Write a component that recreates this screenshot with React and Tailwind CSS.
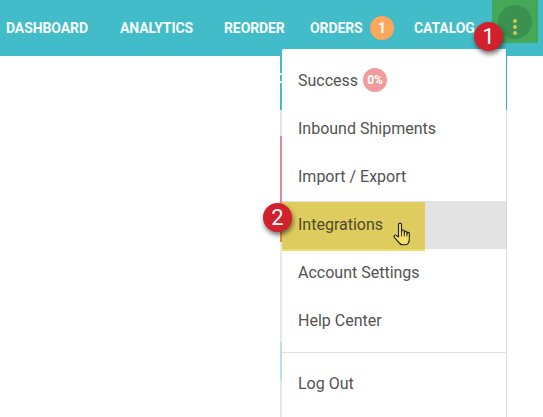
import React from 'react';

const navItems = [
  { label: 'DASHBOARD', width: 'w-[114px]' },
  { label: 'ANALYTICS', width: 'w-[104px]' },
  { label: 'REORDER', width: 'w-[86px]' },
];

const menuItems = ['Inbound Shipments', 'Import / Export'];

// bits of the page that show beside the menu's left edge
const sliver = [
  { h: 'h-[17px]', bg: 'bg-[#42bcc9]' },
  { h: 'h-[2px]', bg: 'bg-[#dff3f5]' },
  { h: 'h-[6px]', bg: 'bg-[#42bcc9]' },
  { h: 'h-[2px]', bg: 'bg-[#dff3f5]' },
  { h: 'h-[27px]', bg: 'bg-[#42bcc9]' },
  { h: 'h-[26px]', bg: 'bg-[#e2e2e2]' },
  { h: 'h-[89px]', bg: 'bg-[#e58a90]' },
  { h: 'h-[17px]', bg: 'bg-[#e08a3c]' },
  { h: 'h-[100px]', bg: 'bg-[#e9e9e9]' },
  { h: 'h-[38px]', bg: 'bg-[#b2e3e8]' },
  { h: 'h-[37px]', bg: 'bg-[#e6e6e6]' },
];

function Callout({ n, className }) {
  return (
    <div className={`absolute h-[29px] w-[29px] rounded-full bg-[#d2202c] text-center text-[22px] leading-[29px] text-white shadow-[1px_3px_5px_rgba(0,0,0,0.55)] ${className}`}>
      {n}
    </div>
  );
}

function HandCursor() {
  return (
    <svg className="absolute left-[393px] top-[222px]" width="18" height="25" viewBox="0 0 18 25">
      <path
        d="M5.5 15V2.6a1.5 1.5 0 0 1 3 0v7.6l.3-1.4a1.3 1.3 0 0 1 2.5.3v1.9l.3-1a1.2 1.2 0 0 1 2.3.4v1.5l.2-.6a1.1 1.1 0 0 1 2.2.4v5.6c0 3-1.6 5.5-4.6 5.5H9.5c-2.2 0-3.2-1.3-4.4-3.2L1.2 15.2a1.4 1.4 0 0 1 2.1-1.8z"
        fill="#f6e06a"
        stroke="#1f1f1f"
        strokeWidth="1.1"
        strokeLinejoin="round"
      />
      <path d="M8.5 10v4.5M11.3 10.5v4M14 11.5v3" stroke="#1f1f1f" strokeWidth="0.9" fill="none" />
    </svg>
  );
}

export default function App() {
  return (
    <div className="relative h-[417px] w-[543px] overflow-hidden bg-white font-['Roboto',sans-serif]">
      {/* top bar */}
      <div className="flex h-[56px] items-center bg-[#42bcc9] pl-[6px] text-[14px] font-bold tracking-[-0.1px] text-[#f7fcfd]">
        {navItems.map(item => (
          <span key={item.label} className={item.width}>{item.label}</span>
        ))}
        <span className="w-[60px]">ORDERS</span>
        <span className="h-[24px] w-[24px] rounded-full bg-[#fda65c] text-center text-[14px] leading-[24px]">1</span>
        <span className="ml-[20px]">CATALOG</span>
      </div>

      {/* highlighted kebab button */}
      <div className="absolute left-[492px] top-0 flex h-[43px] w-[46px] justify-center bg-[#44a856] pt-[5px]">
        <div className="flex h-[34px] w-[34px] flex-col items-center gap-[2px] rounded-full bg-[#3a9150] pt-[14px]">
          <span className="h-[4px] w-[4px] rounded-full bg-[#d4c75a]" />
          <span className="h-[4px] w-[4px] rounded-full bg-[#d4c75a]" />
          <span className="h-[4px] w-[4px] rounded-full bg-[#d4c75a]" />
        </div>
      </div>

      <div className="absolute left-[280px] top-[56px] flex w-[2px] flex-col">
        {sliver.map((s, i) => (
          <div key={i} className={`${s.h} ${s.bg}`} />
        ))}
      </div>

      {/* dropdown */}
      <div className="absolute left-[282px] top-[49px] h-[368px] w-[225px] rounded-tl-[2px] border-r border-[#dcdcdc] bg-white text-[16px] text-[#525252]">
        <div className="mt-[8px] flex h-[48px] items-center pl-[16px]">
          Success
          <span className="mb-[3px] ml-[5px] h-[24px] w-[24px] rounded-full bg-[#f09c9c] text-center text-[12px] font-bold leading-[24px] text-white">0%</span>
        </div>
        {menuItems.map(item => (
          <div key={item} className="flex h-[48px] items-center pl-[16px]">{item}</div>
        ))}
        <div className="relative flex h-[48px] items-center bg-[#e3e3e3] pl-[16px]">
          <div className="absolute left-0 top-[1px] h-[49px] w-[143px] border-b-2 border-[#f0dc62] bg-[#dfcc5f]" />
          <span className="relative text-[#4d4a2b]">Integrations</span>
        </div>
        <div className="flex h-[48px] items-center pl-[16px]">Account Settings</div>
        <div className="flex h-[48px] items-center pl-[16px]">Help Center</div>
        <div className="mt-[7px] border-t border-[#e0e0e0]" />
        <div className="mt-[7px] flex h-[48px] items-center pl-[16px]">Log Out</div>
      </div>

      {/* teal stretch of the menu's right edge */}
      <div className="absolute left-[506px] top-[49px] h-[61px] w-[1px] bg-[#2fb3c1]" />

      <HandCursor />
      <Callout n="1" className="left-[474px] top-[22px]" />
      <Callout n="2" className="left-[263px] top-[203px]" />
    </div>
  );
}
